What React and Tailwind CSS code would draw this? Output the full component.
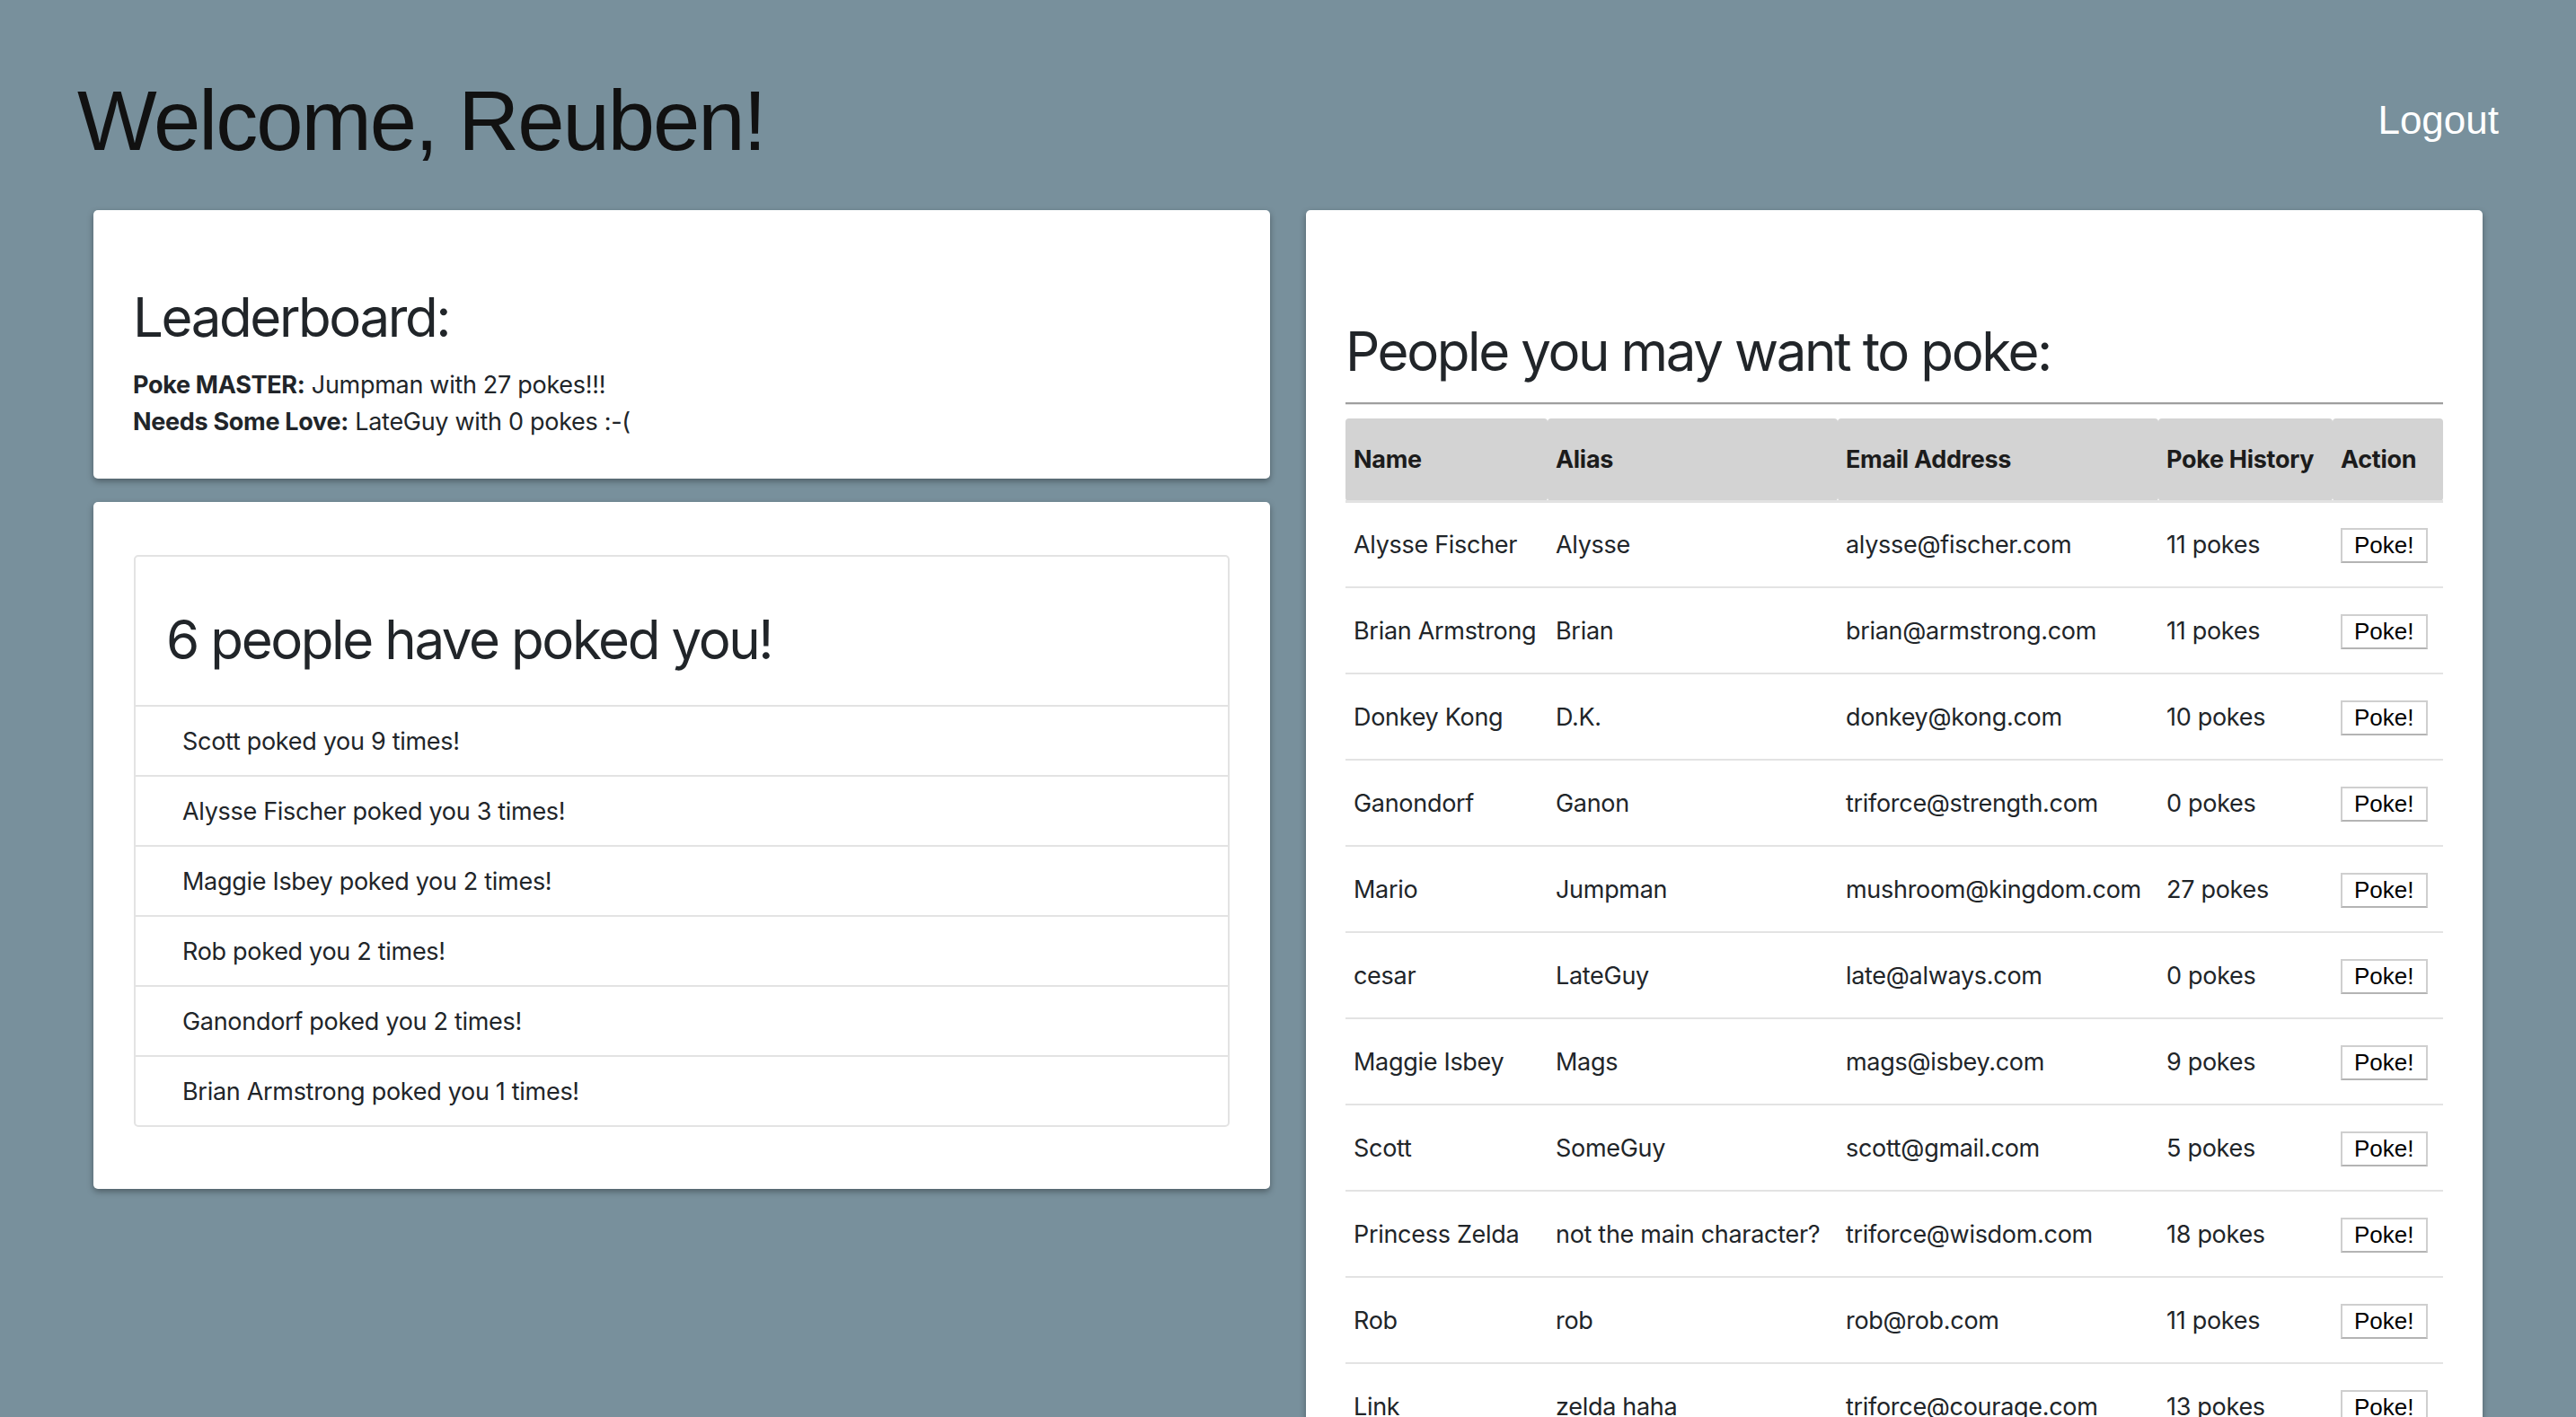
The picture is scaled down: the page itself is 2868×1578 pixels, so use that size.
import React from 'react';

const pokers = [
  'Scott poked you 9 times!',
  'Alysse Fischer poked you 3 times!',
  'Maggie Isbey poked you 2 times!',
  'Rob poked you 2 times!',
  'Ganondorf poked you 2 times!',
  'Brian Armstrong poked you 1 times!',
];

const people = [
  { name: 'Alysse Fischer', alias: 'Alysse', email: 'alysse@fischer.com', pokes: 11 },
  { name: 'Brian Armstrong', alias: 'Brian', email: 'brian@armstrong.com', pokes: 11 },
  { name: 'Donkey Kong', alias: 'D.K.', email: 'donkey@kong.com', pokes: 10 },
  { name: 'Ganondorf', alias: 'Ganon', email: 'triforce@strength.com', pokes: 0 },
  { name: 'Mario', alias: 'Jumpman', email: 'mushroom@kingdom.com', pokes: 27 },
  { name: 'cesar', alias: 'LateGuy', email: 'late@always.com', pokes: 0 },
  { name: 'Maggie Isbey', alias: 'Mags', email: 'mags@isbey.com', pokes: 9 },
  { name: 'Scott', alias: 'SomeGuy', email: 'scott@gmail.com', pokes: 5 },
  { name: 'Princess Zelda', alias: 'not the main character?', email: 'triforce@wisdom.com', pokes: 18 },
  { name: 'Rob', alias: 'rob', email: 'rob@rob.com', pokes: 11 },
  { name: 'Link', alias: 'zelda haha', email: 'triforce@courage.com', pokes: 13 },
];

const card = 'bg-white rounded-[5px] shadow-[0_3px_7px_rgba(0,0,0,0.35)]';
const heading = 'text-[60px] leading-[76px] tracking-[-2.4px] font-normal text-[#212529]';
const body = 'text-[27px] leading-[41px] tracking-[-0.3px]';

function Leaderboard() {
  return (
    <div className={`${card} pt-[81px] pb-[43px] px-[44px]`}>
      <h2 className={heading}>Leaderboard:</h2>
      <div className={`mt-[17px] ${body}`}>
        <p><b className="font-bold">Poke MASTER:</b> Jumpman with 27 pokes!!!</p>
        <p><b className="font-bold">Needs Some Love:</b> LateGuy with 0 pokes :-(</p>
      </div>
    </div>
  );
}

function PokedYou() {
  return (
    <div className={`${card} pt-[59px] pb-[69px] px-[45px]`}>
      <div className="border-2 border-[#e3e3e3] rounded-[5px]">
        <div className="pt-[54px] pb-[35px] px-[34px]">
          <h2 className={heading}>{pokers.length} people have poked you!</h2>
        </div>
        {pokers.map((p) => (
          <div key={p} className={`border-t-2 border-[#e3e3e3] py-[17.5px] px-[52px] ${body}`}>
            {p}
          </div>
        ))}
      </div>
    </div>
  );
}

function PokeTable() {
  return (
    <div className={`${card} pt-[119px] pb-[44px] px-[44px]`}>
      <h2 className={heading}>People you may want to poke:</h2>
      <div className="mt-[19px] h-[2px] bg-[#9f9f9f]" />
      <div className="h-[1px] bg-[#e6e6e6]" />
      <table className={`mt-[15px] w-full table-fixed text-left ${body}`}>
        <colgroup>
          <col className="w-[225px]" />
          <col className="w-[323px]" />
          <col className="w-[357px]" />
          <col className="w-[194px]" />
          <col />
        </colgroup>
        <thead>
          <tr className="border-b-[3px] border-[#e2e2e2]">
            {['Name', 'Alias', 'Email Address', 'Poke History', 'Action'].map((h) => (
              <th key={h} className="h-[92px] px-[9px] bg-[#d3d3d3] rounded-[4px] font-bold text-[#1c1c1c] whitespace-nowrap">
                {h}
              </th>
            ))}
          </tr>
        </thead>
        <tbody>
          {people.map((p) => (
            <tr key={p.name} className="border-b-2 border-[#e3e3e3]">
              <td className="h-[96px] px-[9px] whitespace-nowrap">{p.name}</td>
              <td className="px-[9px] whitespace-nowrap">{p.alias}</td>
              <td className="px-[9px] whitespace-nowrap">{p.email}</td>
              <td className="px-[9px] whitespace-nowrap">{p.pokes} pokes</td>
              <td className="px-[9px]">
                <button className="h-[39px] px-[13px] bg-white border-2 border-[#cfcfcf] border-b-[#b4b4b4] text-[26px] leading-[31px] tracking-normal text-black font-['Liberation_Sans',Arial,sans-serif]">
                  Poke!
                </button>
              </td>
            </tr>
          ))}
        </tbody>
      </table>
    </div>
  );
}

export default function App() {
  return (
    <div className="min-h-screen bg-[#78909c] text-[#212529] font-['Inter','Noto_Sans',sans-serif] pb-[60px]">
      <header className="flex justify-between items-start pt-[78px] px-[86px]">
        <h1 className="text-[94px] leading-[113px] tracking-[-2px] text-[#111] font-['Liberation_Sans',Arial,sans-serif]">
          Welcome, Reuben!
        </h1>
        <a className="mt-[30px] text-[44px] leading-[52px] text-white font-['Liberation_Sans',Arial,sans-serif]" href="#">
          Logout
        </a>
      </header>
      <main className="mt-[43px] px-[104px] grid grid-cols-2 gap-[40px] items-start">
        <div className="flex flex-col gap-[26px]">
          <Leaderboard />
          <PokedYou />
        </div>
        <PokeTable />
      </main>
    </div>
  );
}
